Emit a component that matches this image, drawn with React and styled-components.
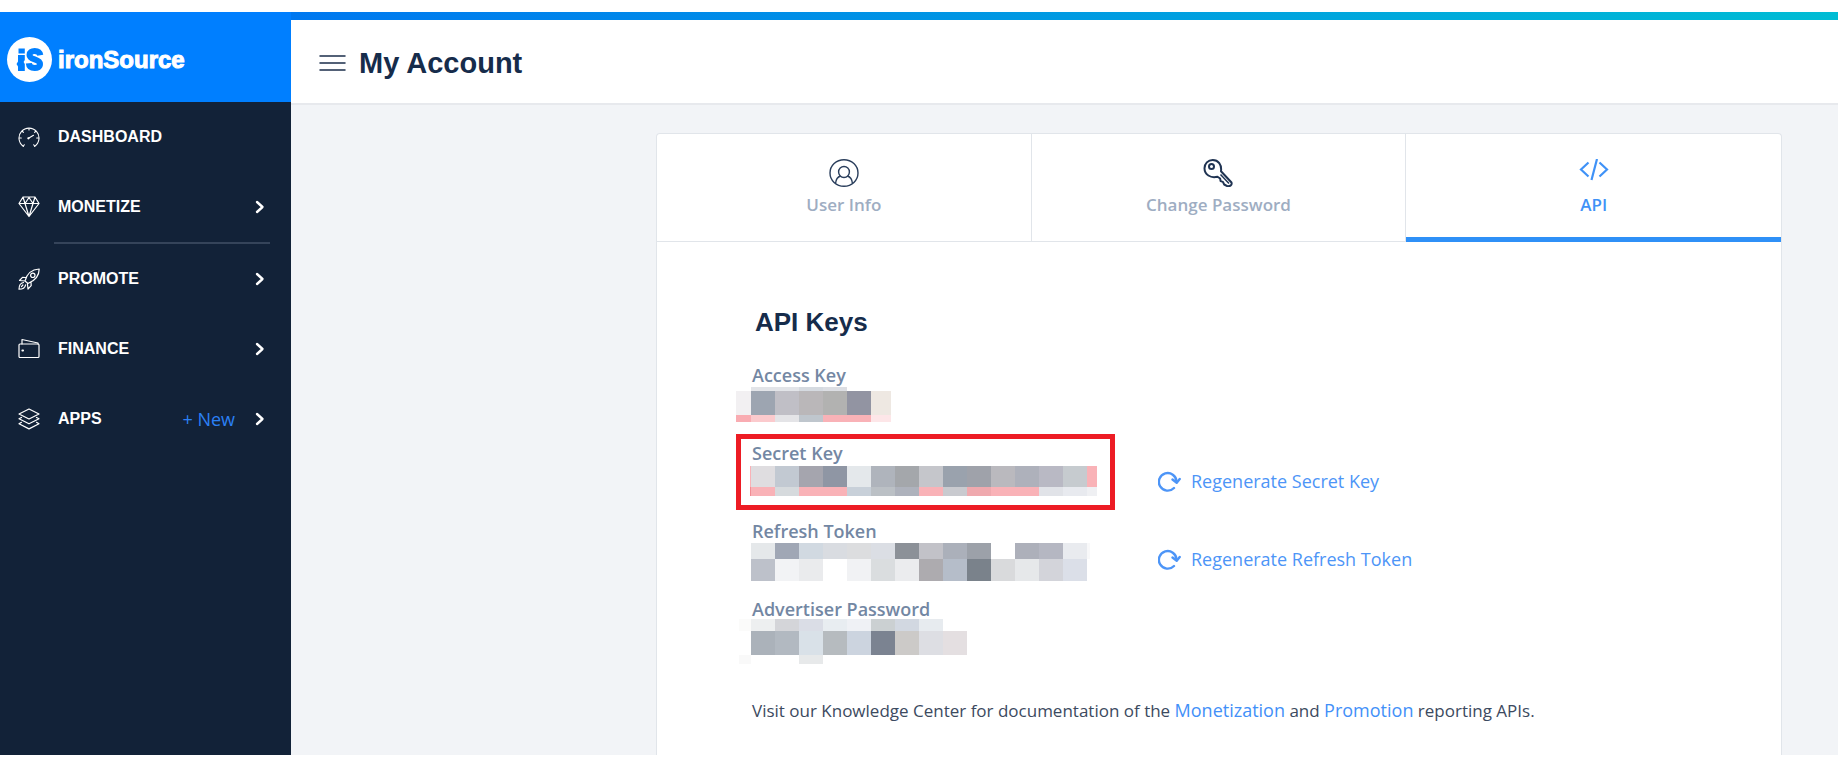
import React from "react";
import styled, { createGlobalStyle } from "styled-components";

const GlobalStyle = createGlobalStyle`
  * { box-sizing: border-box; }
  body {
    margin: 0;
    background: #fff;
    font-family: "Open Sans", "Noto Sans", sans-serif;
    color: #3c4a60;
  }
  a { color: inherit; text-decoration: none; }
  h1, h2, p { margin: 0; }
`;

const heading = `"Liberation Sans", Arial, sans-serif`;

const Page = styled.div`
  display: flex;
  min-height: 100vh;
  padding: 12px 2px 11px 0;
`;

const Sidebar = styled.aside`
  flex: 0 0 291px;
  background: #122238;
`;

const Brand = styled.a`
  display: flex;
  align-items: center;
  gap: 6px;
  height: 90px;
  padding: 5px 7px 0;
  background: #007fff;
`;

const BrandName = styled.span`
  font: bold 24px/30px ${heading};
  color: #fff;
  -webkit-text-stroke: 1px #fff;
`;

const Nav = styled.nav`
  display: flex;
  flex-direction: column;
`;

const NavRow = styled.div`
  display: flex;
  align-items: center;
  height: 70px;
  padding: 0 26px 0 18px;
`;

const NavLink = styled.a`
  flex: 1;
  display: flex;
  align-items: center;
  gap: 18px;
  font: bold 16px/24px ${heading};
  color: #fff;
`;

const NewLink = styled.a`
  margin-right: 20px;
  font-size: 18px;
  line-height: 24px;
  color: #2b80f5;
`;

const ExpandButton = styled.button`
  display: flex;
  padding: 0;
  border: 0;
  background: none;
  color: #fff;
  cursor: pointer;
`;

const NavDivider = styled.hr`
  width: 216px;
  height: 2px;
  margin: 0 0 0 54px;
  border: 0;
  background: #35445a;
`;

const Main = styled.main`
  flex: 1;
  min-width: 0;
  display: flex;
  flex-direction: column;
  background: #f2f4f7;
`;

const TopStripe = styled.div`
  height: 8px;
  background: linear-gradient(90deg, #0078f0, #00bcd4);
`;

const Header = styled.header`
  display: flex;
  align-items: center;
  gap: 13px;
  height: 85px;
  padding: 2px 28px 0;
  border-bottom: 2px solid #e7e9ed;
  background: #fff;
`;

const MenuButton = styled(ExpandButton)`
  color: #1b2e4b;
`;

const PageTitle = styled.h1`
  font: bold 29px/36px ${heading};
  color: #162c4b;
`;

const Content = styled.div`
  flex: 1;
  display: flex;
  padding: 28px 56px 0 365px;
`;

const Card = styled.section`
  flex: 1;
  min-width: 0;
  border: 1px solid #e1e5ea;
  border-bottom: 0;
  border-radius: 4px 4px 0 0;
  background: #fff;
`;

const Tabs = styled.div`
  display: grid;
  grid-template-columns: repeat(3, 1fr);
`;

const Tab = styled.button`
  display: flex;
  flex-direction: column;
  align-items: center;
  gap: 6px;
  height: 108px;
  padding: 25px 0 0;
  border: 0;
  border-right: ${(p) => (p.$active ? "0" : "1px solid #e1e5ea")};
  border-bottom: ${(p) => (p.$active ? "5px solid #2f90f7" : "1px solid #e1e5ea")};
  background: none;
  font: 600 17px/24px "Open Sans", "Noto Sans", sans-serif;
  color: ${(p) => (p.$active ? "#3f92f7" : "#9eadc2")};
  cursor: pointer;
`;

const Panel = styled.div`
  padding: 60px 79px 0;
`;

const SectionTitle = styled.h2`
  padding: 0 19px;
  font: bold 26px/40px ${heading};
  color: #162c4b;
`;

const KeyList = styled.div`
  display: grid;
  row-gap: 2px;
  padding-top: 14px;
`;

const KeyRow = styled.div`
  display: grid;
  grid-template-columns: 379px 1fr;
  column-gap: 43px;
  height: 76px;
`;

const KeyField = styled.div`
  display: flex;
  flex-direction: column;
  outline: ${(p) => (p.$highlight ? "5px solid #ed1c24" : "none")};
  outline-offset: -5px;
`;

const KeyLabel = styled.span`
  height: 29px;
  padding: 6px 16px 0;
  font-weight: 600;
  font-size: 18px;
  line-height: 26px;
  color: #7387a3;
`;

const Regenerate = styled.button`
  display: flex;
  align-items: center;
  align-self: start;
  gap: 10px;
  height: 26px;
  margin-top: 34px;
  padding: 0;
  border: 0;
  background: none;
  font: 400 18px/26px "Open Sans", "Noto Sans", sans-serif;
  color: #4d95f7;
  cursor: pointer;
`;

const Note = styled.p`
  padding: 30px 16px 0;
  font-size: 17px;
  line-height: 28px;
`;

const NoteLink = styled.a`
  font-size: 18px;
  color: #4290f8 !important;
`;

const Icon = ({ w, h, sw = 1, children }) => (
  <svg
    width={w}
    height={h}
    viewBox={`0 0 ${w} ${h}`}
    fill="none"
    stroke="currentColor"
    strokeWidth={sw}
    strokeLinecap="round"
    strokeLinejoin="round"
    aria-hidden="true"
  >
    {children}
  </svg>
);

const LogoMark = () => (
  <svg width="45" height="45" viewBox="0 0 45 45" aria-hidden="true">
    <circle cx="22.5" cy="22.5" r="22.5" fill="#fff" />
    <g fill="#007fff">
      <path d="M11.500 11.500h6.300v5h-6.300z" />
      <path d="M11 18h6.800v5l-1.200 2 1.200 2v7h-6.800v-4.500l-1.500-2.500 1.500-2.500z" />
    </g>
    <path
      d="M33.300 18.300C32.800 15.200 30.500 14 27.700 14c-3 0-5.200 1.400-5.200 3.900 0 5.600 10.500 3.300 10.500 9.200 0 2.900-2.500 4-5.300 4-3.300 0-5.600-1.400-5.900-4.800"
      fill="none"
      stroke="#007fff"
      strokeWidth="6"
    />
  </svg>
);

const GaugeIcon = () => (
  <Icon w={22} h={22} sw={1.1}>
    <path d="M5.300 20.300A10 10 0 1 1 16.700 20.300" />
    <path d="M5.300 20.300l1-1.500M16.700 20.300l-1-1.500M1.500 12h1.800M18.700 12h1.800M11 2.500v1.400M4.500 5.500l.9.900M17.500 5.500l-.9.900M10.500 12.300l5-3" />
    <circle cx="10.400" cy="12.300" r="0.600" />
  </Icon>
);

const GemIcon = () => (
  <Icon w={22} h={22} sw={1.2}>
    <path d="M5 1h12l4 6.500L11 20.500 1 7.500zM1 7.500h20M5 1l2 6.500L11 20.500l4-13M17 1l-2 6.500M7 7.500l4-6 4 6" />
  </Icon>
);

const RocketIcon = () => (
  <Icon w={22} h={22} sw={1.2}>
    <path d="M7 13C8.500 7 13 1.500 21.200 1c0 7.500-5 12-11.200 14.500zM7.600 9.500L4.500 9.300 1.500 12.500l5.500.5M13 14.300l.2 3.400-3.200 3.300-.6-5.500" />
    <circle cx="14.800" cy="7.300" r="2.200" />
    <path d="M5.500 14.500C2.500 15 1 17.500 1 21.200c3.500 0 6-1.500 6.600-4.400M4.900 17l-1.400 1.600" />
  </Icon>
);

const WalletIcon = () => (
  <Icon w={22} h={22} sw={1.2}>
    <rect x="1" y="6" width="20" height="13.500" rx="1" />
    <path d="M4 6V1.500L20 5v1" />
    <path d="M4.300 12.500h.8" strokeWidth="1.800" />
  </Icon>
);

const LayersIcon = () => (
  <Icon w={22} h={22} sw={1.200}>
    <path d="M11 1L21 6 11 11 1 6zM3.500 9.500L1 10.800l10 5 10-5-2.500-1.300M3.500 14.300L1 15.700l10 5.200 10-5.200-2.500-1.400" />
  </Icon>
);

const Chevron = () => (
  <Icon w={10} h={14} sw={2.400}>
    <path d="M2 2l5.500 5L2 12" />
  </Icon>
);

const MenuIcon = () => (
  <Icon w={27} h={18} sw={1.500}>
    <path d="M1 2h25M1 9h25M1 16h25" />
  </Icon>
);

const UserIcon = () => (
  <svg width="30" height="28" viewBox="0 0 30 28" fill="none" stroke="#2a3e5c" strokeWidth="1.400" aria-hidden="true">
    <ellipse cx="15" cy="14" rx="14" ry="13.300" />
    <ellipse cx="15" cy="13" rx="5.400" ry="5.500" />
    <path d="M6.600 24.300c.3-4 2-6.300 5-7.300M23.400 24.300c-.3-4-2-6.300-5-7.300" />
  </svg>
);

const KeyIcon = () => (
  <svg width="30" height="28" viewBox="0 0 30 28" fill="none" stroke="#1f3352" strokeWidth="2" strokeLinejoin="round" aria-hidden="true">
    <path d="M14.500 17.700C7.500 19.500 1.500 15.500 1.500 9.300 1.500 4.500 5 1 9.700 1c5.500 0 9.200 4.500 8.300 11.200L28.500 23.500c.8 2.500-1.500 4-4.200 3.700l-3.100-1.700-1.300-2.600-2.300-.8-.5-2.600z" />
    <circle cx="8.500" cy="7.600" r="2.500" />
    <path d="M17.500 15.500l8.500 9" strokeWidth="1.500" />
  </svg>
);

const CodeIcon = () => (
  <svg width="30" height="28" viewBox="0 0 30 28" fill="none" stroke="currentColor" strokeWidth="2.200" aria-hidden="true">
    <path d="M9.500 3.500L2 10.500 9.500 17.500M20.500 3.500L28 10.500 20.500 17.500M18 0l-5.500 21" />
  </svg>
);

const RefreshIcon = () => (
  <Icon w={23} h={22} sw={2.400}>
    <path d="M16 18A8.800 8.800 0 1 1 18.500 11.500" />
    <path d="M14.500 9.500l4.200 3.200 3-3.700" />
  </Icon>
);

/* Censored key value: bands of flat 24px blocks. A cell is [x, width, colour]. */
const Mosaic = ({ label, bands }) => (
  <svg width="379" height="46" viewBox="0 0 379 46" role="img" aria-label={label} shapeRendering="crispEdges">
    {bands.map(({ y, h, lead = [], start = 15, cells, tail = [] }) => (
      <g key={y}>
        {[...lead, ...cells.map((c, i) => [start + i * 24, 24, c]), ...tail].map(([x, w, c]) => (
          <rect key={x} x={x} y={y} width={w} height={h} fill={c} />
        ))}
      </g>
    ))}
  </svg>
);

const KEYS = [
  {
    name: "Access Key",
    bands: [
      { y: 2, h: 4, cells: ["#e2e4e8", "#e2e4e8", "#d5dae0", "#dcdee3"] },
      { y: 6, h: 24, lead: [[0, 15, "#f2f0f2"]], cells: ["#9da5b1", "#c0bfc6", "#bab7b9", "#b2b2b1", "#9294a2"], tail: [[135, 20, "#eee8e2"]] },
      { y: 30, h: 7, lead: [[0, 15, "#f9acb2"]], cells: ["#fbcacd", "#e4e4e7", "#bfc6cd", "#f9b2b7", "#f9b2b7"], tail: [[135, 20, "#fde6e8"]] },
    ],
  },
  {
    name: "Secret Key",
    highlight: true,
    action: "Regenerate Secret Key",
    bands: [
      { y: 3, h: 21, lead: [[14, 1, "#f9b2b7"]], cells: ["#dfdde0", "#c2c9d2", "#a5a5ae", "#8f96a4", "#e4e8eb", "#afb4bc", "#a4a7ab", "#c5c6cb", "#9aa2ad", "#9fa2aa", "#bab9be", "#aeb1bb", "#b9b9c4", "#c6cbcf"], tail: [[351, 10, "#f9b2b7"]] },
      { y: 24, h: 9, lead: [[14, 1, "#f18d94"]], cells: ["#f9b2b7", "#d6dadd", "#f9b2b7", "#f9b2b7", "#c8d0d9", "#bbc0c5", "#aeb2bc", "#f9b2b7", "#c9cacf", "#efa9ae", "#f9b2b7", "#f9b2b7", "#e1e3e8", "#e8eaef"], tail: [[351, 10, "#eff0f3"]] },
    ],
  },
  {
    name: "Refresh Token",
    action: "Regenerate Refresh Token",
    bands: [
      { y: 2, h: 16, cells: ["#e5e8ea", "#a0a7b5", "#d1d9e1", "#d9dce1", "#dcdddf", "#dbdee4", "#8c9198", "#c2c2c8", "#abb0ba", "#9ca1a9", "#ffffff", "#adb0ba", "#b5b7c2", "#e9ebef"], tail: [[351, 3, "#f8f8f9"]] },
      { y: 18, h: 22, cells: ["#bdc1ca", "#f2f3f5", "#eaebed", "#ffffff", "#f1f2f4", "#dadddf", "#ebecee", "#adabaf", "#b5bdc9", "#7a828b", "#d9dadc", "#e6e8ea", "#d3d4da", "#dbdfe8"] },
    ],
  },
  {
    name: "Advertiser Password",
    bands: [
      { y: 0, h: 12, lead: [[3, 12, "#fbfbfa"]], cells: ["#edeff0", "#d4d5d9", "#dadde6", "#e8edf1", "#eff1f5", "#cbd0d2", "#d2d8e1", "#e7ebef"] },
      { y: 12, h: 24, cells: ["#abb2ba", "#b2b9c1", "#d9e1e8", "#b6bbbf", "#ccd4df", "#7b8391", "#cccac8", "#dddee3", "#e4dfe1"] },
      { y: 36, h: 9, start: 63, lead: [[3, 12, "#f9f9f9"]], cells: ["#e7e9ea"] },
    ],
  },
];

const NAV = [
  { name: "DASHBOARD", Glyph: GaugeIcon },
  { name: "MONETIZE", Glyph: GemIcon, expand: true, divider: true },
  { name: "PROMOTE", Glyph: RocketIcon, expand: true },
  { name: "FINANCE", Glyph: WalletIcon, expand: true },
  { name: "APPS", Glyph: LayersIcon, expand: true, create: true },
];

const TABS = [
  { name: "User Info", Glyph: UserIcon },
  { name: "Change Password", Glyph: KeyIcon },
  { name: "API", Glyph: CodeIcon, active: true },
];

export default function App() {
  return (
    <>
      <GlobalStyle />
      <Page>
        <Sidebar>
          <Brand href="#">
            <LogoMark />
            <BrandName>ironSource</BrandName>
          </Brand>
          <Nav>
            {NAV.map(({ name, Glyph, expand, divider, create }) => (
              <React.Fragment key={name}>
                <NavRow>
                  <NavLink href="#">
                    <Glyph />
                    {name}
                  </NavLink>
                  {create && <NewLink href="#">+ New</NewLink>}
                  {expand && (
                    <ExpandButton aria-label={`Expand ${name}`}>
                      <Chevron />
                    </ExpandButton>
                  )}
                </NavRow>
                {divider && <NavDivider />}
              </React.Fragment>
            ))}
          </Nav>
        </Sidebar>
        <Main>
          <TopStripe />
          <Header>
            <MenuButton aria-label="Toggle menu">
              <MenuIcon />
            </MenuButton>
            <PageTitle>My Account</PageTitle>
          </Header>
          <Content>
            <Card>
              <Tabs role="tablist">
                {TABS.map(({ name, Glyph, active }) => (
                  <Tab key={name} role="tab" aria-selected={!!active} $active={active}>
                    <Glyph />
                    {name}
                  </Tab>
                ))}
              </Tabs>
              <Panel>
                <SectionTitle>API Keys</SectionTitle>
                <KeyList>
                  {KEYS.map(({ name, bands, highlight, action }) => (
                    <KeyRow key={name}>
                      <KeyField $highlight={highlight}>
                        <KeyLabel>{name}</KeyLabel>
                        <Mosaic label={`${name} (hidden)`} bands={bands} />
                      </KeyField>
                      {action && (
                        <Regenerate>
                          <RefreshIcon />
                          {action}
                        </Regenerate>
                      )}
                    </KeyRow>
                  ))}
                </KeyList>
                <Note>
                  Visit our Knowledge Center for documentation of the <NoteLink href="#">Monetization</NoteLink> and{" "}
                  <NoteLink href="#">Promotion</NoteLink> reporting APIs.
                </Note>
              </Panel>
            </Card>
          </Content>
        </Main>
      </Page>
    </>
  );
}
